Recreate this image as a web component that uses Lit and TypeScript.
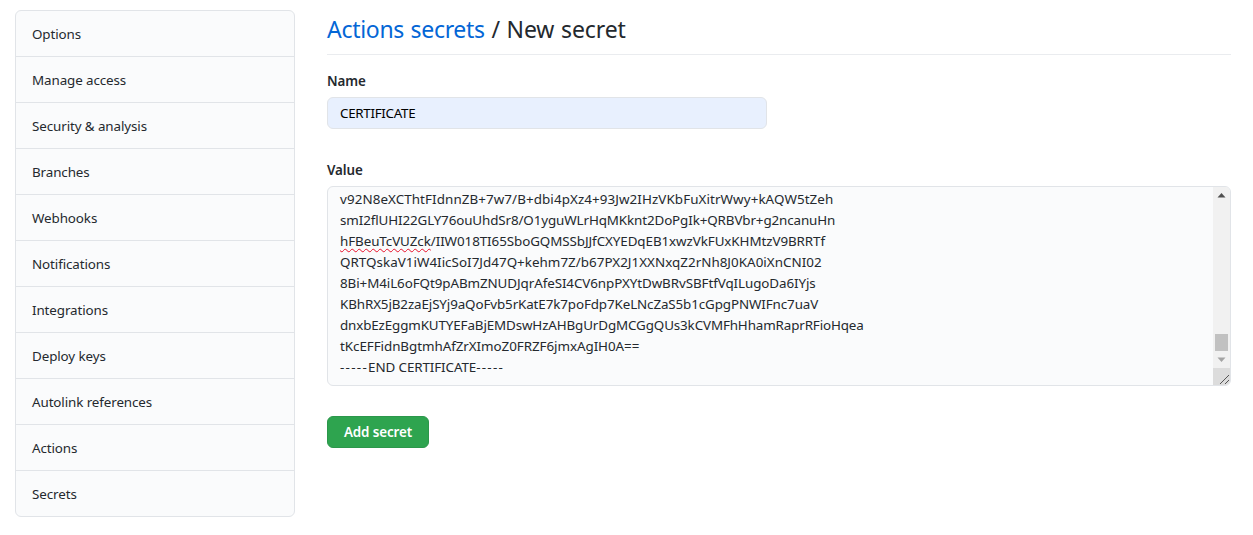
import { css, html, LitElement } from 'lit';
import { customElement } from 'lit/decorators.js';

const MENU = [
  'Options',
  'Manage access',
  'Security & analysis',
  'Branches',
  'Webhooks',
  'Notifications',
  'Integrations',
  'Deploy keys',
  'Autolink references',
  'Actions',
  'Secrets',
];

const LINES = [
  { text: 'v92N8eXCThtFIdnnZB+7w7/B+dbi4pXz4+93Jw2IHzVKbFuXitrWwy+kAQW5tZeh', spacing: 0.085 },
  { text: 'smI2flUHI22GLY76ouUhdSr8/O1yguWLrHqMKknt2DoPgIk+QRBVbr+g2ncanuHn', spacing: -0.115 },
  { text: '/IIW018TI65SboGQMSSbJJfCXYEDqEB1xwzVkFUxKHMtzV9BRRTf', spacing: -0.08, typo: 'hFBeuTcVUZck' },
  { text: 'QRTQskaV1iW4IicSoI7Jd47Q+kehm7Z/b67PX2J1XXNxqZ2rNh8J0KA0iXnCNI02', spacing: 0.026 },
  { text: '8Bi+M4iL6oFQt9pABmZNUDJqrAfeSI4CV6npPXYtDwBRvSBFtfVqILugoDa6IYjs', spacing: -0.083 },
  { text: 'KBhRX5jB2zaEjSYj9aQoFvb5rKatE7k7poFdp7KeLNcZaS5b1cGpgPNWIFnc7uaV', spacing: -0.115 },
  { text: 'dnxbEzEggmKUTYEFaBjEMDswHzAHBgUrDgMCGgQUs3kCVMFhHhamRaprRFioHqea', spacing: -0.13 },
  { text: 'tKcEFFidnBgtmhAfZrXImoZ0FRZF6jmxAgIH0A==', spacing: -0.055 },
];

@customElement('app-root')
export class AppRoot extends LitElement {
  public static styles = css`
    :host {
      display: block;
      height: 535px;
      overflow: hidden;
      background: #fff;
      color: #24292e;
      font-family: 'Noto Sans', 'Open Sans', sans-serif;
      font-size: 14px;
    }

    .page {
      display: flex;
      gap: 32px;
      padding: 10px 22px 0 15px;
    }

    .menu {
      flex: none;
      width: 280px;
      height: 507px;
      box-sizing: border-box;
      background: #fafbfc;
      border: 1px solid #e1e4e8;
      border-radius: 6px;
    }

    .menu-item {
      box-sizing: border-box;
      height: 46px;
      padding-left: 16px;
      line-height: 47px;
      font-size: 13.4px;
      letter-spacing: -0.1px;
      border-bottom: 1px solid #e1e4e8;
    }

    .menu-item:last-child {
      border-bottom: 0;
    }

    .main {
      flex: 1;
      min-width: 0;
    }

    .title {
      height: 44px;
      margin: 0 0 17px;
      border-bottom: 1px solid #eaecef;
      font-size: 23px;
      font-weight: 400;
      line-height: 38px;
      letter-spacing: -0.1px;
      word-spacing: 0.8px;
    }

    .title a {
      color: #0366d6;
      letter-spacing: -0.3px;
      text-decoration: none;
    }

    label {
      display: block;
      height: 18px;
      margin-bottom: 7px;
      font-size: 13.4px;
      font-weight: 600;
      line-height: 18px;
      letter-spacing: -0.1px;
    }

    .name-input {
      box-sizing: border-box;
      width: 440px;
      height: 32px;
      margin-bottom: 32px;
      padding-left: 12px;
      background: #e8f0fe;
      border: 1px solid #e1e4e8;
      border-radius: 6px;
      color: #000;
      font-size: 13.4px;
      line-height: 30px;
      letter-spacing: -0.3px;
    }

    .value-box {
      display: flex;
      box-sizing: border-box;
      height: 200px;
      background: #fafbfc;
      border: 1px solid #e1e4e8;
      border-radius: 6px;
      overflow: hidden;
    }

    .value-text {
      flex: 1;
      min-width: 0;
      padding: 2px 0 0 12px;
      font-size: 13.4px;
      line-height: 21px;
      white-space: nowrap;
    }

    .value-line {
      height: 21px;
    }

    .end-line {
      letter-spacing: -0.1px;
    }

    .dashes {
      letter-spacing: 1.3px;
    }

    .typo {
      text-decoration: underline wavy #e8102a 1px;
      text-underline-offset: 2px;
    }

    .scrollbar {
      display: flex;
      flex: none;
      flex-direction: column;
      align-items: center;
      width: 17px;
      background: #f1f1f1;
    }

    .arrow {
      flex: none;
      width: 17px;
      height: 17px;
    }

    .track {
      display: flex;
      flex: 1;
      flex-direction: column;
      justify-content: flex-end;
    }

    .thumb {
      width: 13px;
      height: 17px;
      background: #c1c1c1;
    }

    .resizer {
      flex: none;
      width: 17px;
      height: 17px;
      background: #dcdcdc;
    }

    .add {
      display: block;
      box-sizing: border-box;
      width: 102px;
      height: 32px;
      margin-top: 30px;
      padding: 0;
      background: #2ea44f;
      border: 1px solid #2c974b;
      border-radius: 6px;
      color: #fff;
      font-family: inherit;
      font-size: 13.4px;
      font-weight: 600;
      letter-spacing: -0.1px;
    }
  `;

  public render() {
    return html`<div class="page">
      <nav class="menu">
        ${MENU.map((item) => html`<div class="menu-item">${item}</div>`)}
      </nav>
      <main class="main">
        <h1 class="title"><a href="#">Actions secrets</a> / New secret</h1>
        <label>Name</label>
        <div class="name-input">CERTIFICATE</div>
        <label>Value</label>
        <div class="value-box">
          <div class="value-text">
            ${LINES.map(
              (line) => html`<div class="value-line" style="letter-spacing: ${line.spacing}px;">
                ${line.typo ? html`<span class="typo">${line.typo}</span>` : ''}${line.text}
              </div>`,
            )}
            <div class="value-line end-line">
              <span class="dashes">-----</span>END CERTIFICATE<span class="dashes">-----</span>
            </div>
          </div>
          <div class="scrollbar">
            <svg class="arrow" viewBox="0 0 17 17"><path d="M4.5 10.5 8.5 6l4 4.5z" fill="#505050" /></svg>
            <div class="track"><div class="thumb"></div></div>
            <svg class="arrow" viewBox="0 0 17 17"><path d="M4.5 6.5h8l-4 4.5z" fill="#a3a3a3" /></svg>
            <svg class="resizer" viewBox="0 0 17 17">
              <path d="M7 16 16 7M12 16l4-4" stroke="#555" stroke-width="1" fill="none" />
            </svg>
          </div>
        </div>
        <button class="add">Add secret</button>
      </main>
    </div>`;
  }
}
